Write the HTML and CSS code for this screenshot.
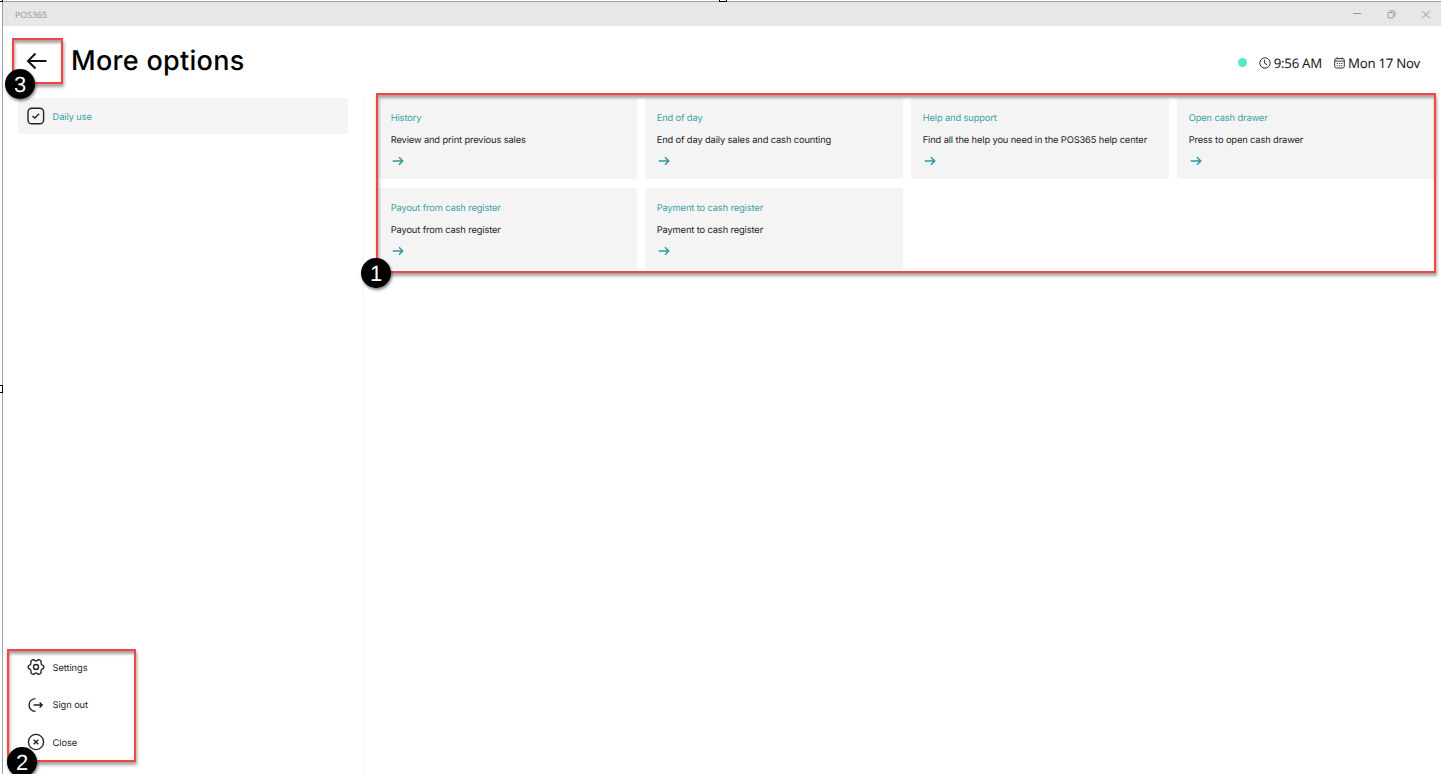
FILE: index.html
```html
<!DOCTYPE html>
<html lang="en">
<head>
<meta charset="utf-8">
<title>POS365</title>
<link rel="stylesheet" href="styles.css">
</head>
<body>
<svg class="defs" width="0" height="0">
  <symbol id="go" viewBox="0 0 12 12"><path d="M.7 6h10M7 2.3 10.7 6 7 9.7" fill="none" stroke="currentColor" stroke-width="1.5"/></symbol>
</svg>
<div class="window">
  <div class="titlebar">
    <span class="app-name">POS365</span>
    <div class="controls">
      <svg width="10" height="10" viewBox="0 0 10 10"><path d="M1 3.5h8"/></svg>
      <svg width="10" height="10" viewBox="0 0 10 10"><rect x="1" y="2.5" width="5.5" height="5.5" rx="1"/><path d="M2.5 1h4q1.5 0 1.5 1.5v4"/></svg>
      <svg width="10" height="10" viewBox="0 0 10 10"><path d="m1.3.8 7.4 7.4m0-7.4L1.3 8.2"/></svg>
    </div>
  </div>
  <header class="header">
    <svg class="back" width="22" height="18" viewBox="0 0 22 18"><path d="M20.5 9H2M9.5 1.5 2 9l7.5 7.5"/></svg>
    <h1>More options</h1>
    <div class="status">
      <span class="dot"></span>
      <svg class="clock" width="12" height="12" viewBox="0 0 12 12"><circle cx="6" cy="6" r="5.2"/><path d="M5.6 2.8v3.5l2.7 1.5"/></svg>
      <span class="time">9:56 AM</span>
      <svg class="cal" width="11" height="12" viewBox="0 0 11 12"><rect x=".7" y="1.6" width="9.6" height="9.4" rx="1.7"/><path d="M3 .3v2M8 .3v2M1 4.1h9"/><path d="M2.7 6.5h6M2.7 8.7h6" stroke-dasharray="1.2 1.1"/></svg>
      <span class="date">Mon 17 Nov</span>
    </div>
  </header>
  <div class="body">
    <nav class="sidebar">
      <div class="item active">
        <svg width="18" height="18" viewBox="0 0 18 18"><rect x="1" y="1.2" width="15.6" height="15.6" rx="3.8"/><path d="m5.5 9 2.3 2.1 4.3-4.3"/></svg>
        <span>Daily use</span>
      </div>
      <div class="bottom">
        <div class="item">
          <svg width="18" height="18" viewBox="0 0 18 18"><circle cx="9" cy="9" r="2.5"/><path transform="rotate(90 9 9)" d="M6.6 3.3 Q7.2 1.1 9 1.1 Q10.8 1.1 11.4 3.3 Q11.8 4.1 12.9 3.9 Q15 3.4 16 5 Q16.9 6.6 15.3 8.2 Q14.7 9 15.3 9.8 Q16.9 11.4 16 13 Q15 14.6 12.9 14.1 Q11.8 13.9 11.4 14.7 Q10.8 16.9 9 16.9 Q7.2 16.9 6.6 14.7 Q6.2 13.9 5.1 14.1 Q3 14.6 2 13 Q1.1 11.4 2.7 9.8 Q3.3 9 2.7 8.2 Q1.1 6.6 2 5 Q3 3.4 5.1 3.9 Q6.2 4.1 6.6 3.3Z"/></svg>
          <span>Settings</span>
        </div>
        <div class="item">
          <svg width="18" height="18" viewBox="0 0 18 18"><path d="M8.5 2.6C-.1 3.2-.1 14.8 8.5 15.4M6.5 9h8.7M12.6 6.5 15.2 9l-2.6 2.5"/></svg>
          <span>Sign out</span>
        </div>
        <div class="item">
          <svg width="18" height="18" viewBox="0 0 18 18"><circle cx="9" cy="9" r="7.6"/><path d="m6.7 6.7 4.6 4.6m0-4.6-4.6 4.6"/></svg>
          <span>Close</span>
        </div>
      </div>
    </nav>
    <main class="cards">
      <section class="card"><h2>History</h2><p>Review and print previous sales</p><svg><use href="#go"/></svg></section>
      <section class="card"><h2>End of day</h2><p>End of day daily sales and cash counting</p><svg><use href="#go"/></svg></section>
      <section class="card"><h2>Help and support</h2><p>Find all the help you need in the POS365 help center</p><svg><use href="#go"/></svg></section>
      <section class="card"><h2>Open cash drawer</h2><p>Press to open cash drawer</p><svg><use href="#go"/></svg></section>
      <section class="card"><h2>Payout from cash register</h2><p>Payout from cash register</p><svg><use href="#go"/></svg></section>
      <section class="card"><h2>Payment to cash register</h2><p>Payment to cash register</p><svg><use href="#go"/></svg></section>
    </main>
  </div>
</div>
<div class="callout callout-cards"></div><div class="badge badge-1">1</div>
<div class="callout callout-menu"></div><div class="badge badge-2">2</div>
<div class="callout callout-back"></div><div class="badge badge-3">3</div>
<i class="handle handle-corner"></i><i class="handle handle-top"></i><i class="handle handle-left"></i>
</body>
</html>
```
FILE: styles.css
```css
* { box-sizing: border-box; }
body {
  margin: 0;
  height: 774px;
  padding: 1px 0 0 2px;
  position: relative;
  overflow: hidden;
  background: #fff;
  font-family: Inter, "Liberation Sans", sans-serif;
  font-size: 9.3px;
  color: #222;
  text-rendering: geometricPrecision;
}
.defs { position: absolute; }
svg { display: block; flex: none; }
.window {
  height: 773px;
  border-top: 1px solid #9ba1a6;
  border-left: 1px solid #9ba1a6;
  display: flex;
  flex-direction: column;
}
.titlebar {
  height: 24px;
  background: #e7e7e7;
  display: flex;
  align-items: center;
  justify-content: space-between;
  padding: 1px 10px 0 12px;
  font-family: "Open Sans", "Noto Sans", sans-serif;
  font-size: 8.8px;
  color: #929292;
}
.controls { display: flex; gap: 24.5px; }
.controls svg { fill: none; stroke: #979797; stroke-width: 1; }
.header {
  height: 72px;
  display: flex;
  align-items: center;
  padding: 0 21px 3px 23px;
}
.back { fill: none; stroke: #111; stroke-width: 2; }
h1 {
  margin: 0 auto 0 23px;
  font-size: 27px;
  line-height: 32px;
  font-weight: 500;
  letter-spacing: .3px;
  color: #000;
}
.status {
  display: flex;
  align-items: center;
  margin-top: 4px;
  font-family: "Noto Sans", sans-serif;
  font-size: 13.2px;
  letter-spacing: -.25px;
  line-height: 18px;
  color: #1c1c1c;
  white-space: nowrap;
}
.status svg { fill: none; stroke: #333; stroke-width: 1; }
.dot { width: 9px; height: 9px; border-radius: 50%; background: #5ae6c5; margin-right: 12px; }
.clock { margin-right: 3px; }
.cal { margin: 0 3px 0 12px; }
.body { flex: 1; display: flex; }
.sidebar {
  width: 361px;
  border-right: 1px solid #f4f4f4;
  padding: 0 15px 14px;
  display: flex;
  flex-direction: column;
  justify-content: space-between;
  letter-spacing: -.08px;
}
.item {
  height: 36px;
  display: flex;
  align-items: center;
  gap: 8px;
  padding-left: 8.5px;
}
.item span { margin-top: 2px; }
.item svg { fill: none; stroke: #222; stroke-width: 1.4; }
.active { background: #f4f4f4; color: #3ba1a5; border-radius: 2px; }
.bottom { display: flex; flex-direction: column; gap: 1.5px; }
.cards {
  flex: 1;
  display: grid;
  grid-template-columns: repeat(4, 258px);
  grid-auto-rows: 81px;
  gap: 9px 8px;
  padding-left: 15px;
  letter-spacing: -.12px;
}
.card {
  background: #f4f4f4;
  border-radius: 2px;
  padding: 14px 11.7px 0;
  white-space: nowrap;
}
.card h2, .card p { margin: 0; font-size: inherit; font-weight: 400; line-height: 14px; }
.card h2 { color: #3ba1a5; margin-bottom: 8px; }
.card svg { width: 12px; height: 12px; margin: 7px 0 0 1.7px; color: #30999e; }
.callout {
  position: absolute;
  border: 2px solid #f94343;
  box-shadow: 1px 3px 3px rgba(0,0,0,.36), inset 1px 3px 3px rgba(0,0,0,.36);
}
.callout-cards { left: 376px; top: 93px; width: 1060px; height: 180px; }
.callout-menu { left: 7px; top: 649px; width: 129px; height: 113px; }
.callout-back { left: 12px; top: 38px; width: 51px; height: 46px; }
.badge {
  position: absolute;
  width: 30px;
  height: 30px;
  border-radius: 50%;
  background: #000;
  color: #fff;
  font: 22px/31px "Liberation Sans", sans-serif;
  text-align: center;
  box-shadow: 1px 2px 3px rgba(0,0,0,.5);
}
.badge-1 { left: 361px; top: 258px; }
.badge-2 { left: 7px; top: 747px; }
.badge-3 { left: 5px; top: 69px; }
.handle { position: absolute; border: 1px solid #000; background: #fff; }
.handle-corner { left: -5px; top: -6px; width: 8px; height: 8px; }
.handle-top { left: 719px; top: -6px; width: 8px; height: 8px; }
.handle-left { left: -5px; top: 385px; width: 8px; height: 8px; }
```
